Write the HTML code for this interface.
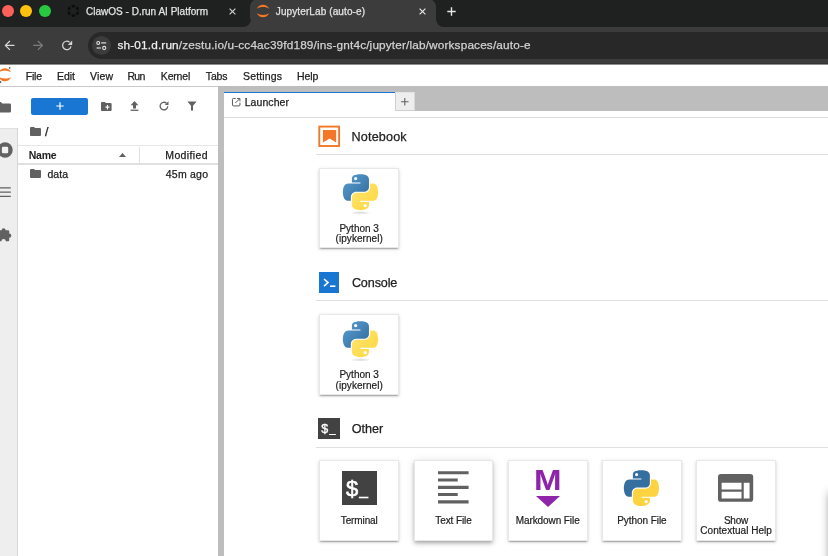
<!DOCTYPE html>
<html lang="en">
<head>
<meta charset="utf-8">
<title>JupyterLab (auto-e)</title>
<style>
*{box-sizing:border-box;margin:0;padding:0}
html,body{width:828px;height:556px;overflow:hidden;background:#fff}
body{font-family:"Liberation Sans",sans-serif;color:#212121;position:relative;-webkit-font-smoothing:antialiased}
#app{position:absolute;left:0;top:0;width:828px;height:556px;overflow:hidden;will-change:transform}
.abs{position:absolute}
.t{position:absolute;white-space:nowrap;line-height:1;-webkit-text-stroke:.25px currentColor}
svg{position:absolute;display:block;overflow:visible}
/* ---------- browser chrome ---------- */
#tabstrip{left:0;top:0;width:828px;height:27px;background:#1f2020}
#toolbar{left:0;top:27px;width:828px;height:37px;background:#3c3c3c}
#acttab{left:250.3px;top:-1px;width:185.4px;height:28px;background:#3c3c3c;border-radius:8px 8px 0 0}
.flare{width:8px;height:8px;top:19px;background:#3c3c3c}
.flare i{position:absolute;left:0;top:0;width:8px;height:8px;background:#1f2020}
#fl i{border-radius:0 0 8px 0}
#fr i{border-radius:0 0 0 8px}
.dot{width:11.8px;height:11.8px;border-radius:50%;top:5.4px}
#pill{left:87.6px;top:31.9px;width:760px;height:27.1px;border-radius:13.6px;background:#282828}
#tune{left:91.6px;top:35.8px;width:19.2px;height:19.2px;border-radius:50%;background:#3c3c3c}
.ct{color:#e3e3e3;font-size:12px}
/* ---------- jupyter ---------- */
#menubar{left:0;top:64px;width:828px;height:22px;background:#fff}
.m{top:70px;font-size:13px;color:#212121}
#side{left:0;top:128px;width:18px;height:428px;background:#eeeeee;border-top:1px solid #e0e0e0}
#sideb{left:17px;top:128px;width:1px;height:428px;background:#d6d6d6}
#dockbg{left:218px;top:86px;width:610px;height:470px;background:#bdbdbd}
#docktab{left:224px;top:91.8px;width:170.6px;height:26px;background:#fff}
#dockblue{left:224px;top:91.5px;width:170.6px;height:1.6px;background:#1976d2}
#dockadd{left:394.8px;top:92px;width:19.8px;height:19.4px;background:#eeeeee;border:1px solid #cfcfcf;border-top-color:#e4e4e4;border-right-color:#d8d8d8}
#main{left:224px;top:111.4px;width:604px;height:450px;background:#fff}
#mainline{left:224px;top:117px;width:604px;height:1.2px;background:#dddddd}
.fb{font-size:12.5px;color:#212121}
.sec{font-size:15.5px;color:#212121}
.hr{height:1px;background:#e0e0e0;left:316.4px;width:512px}
.card{width:79.8px;height:80.9px;background:#fff;border:1px solid #e8e8e8;box-shadow:0 1.6px 1.6px rgba(0,0,0,.14),0 2.4px .8px -1.6px rgba(0,0,0,.2),0 .8px 4px rgba(0,0,0,.12)}
.card.hov{box-shadow:0 3.2px 4px rgba(0,0,0,.14),0 .8px 8px rgba(0,0,0,.12),0 1.6px 3.2px -.8px rgba(0,0,0,.2)}
.lbl{position:absolute;left:0;width:100%;text-align:center;font-size:10px;line-height:10px;color:#212121;white-space:nowrap;-webkit-text-stroke:.2px currentColor}
/*TUNE*/
#tab1{left:86.0px;top:7.2px;font-size:10px;letter-spacing:0.012px}
#tab2{left:275.8px;top:7.2px;font-size:10px;letter-spacing:0.107px}
#url{left:117.5px;top:39.5px;font-size:11.8px;letter-spacing:0.149px}
#m1{left:25.8px;top:70.8px;font-size:10.5px;letter-spacing:-0.241px}
#m2{left:57.0px;top:70.8px;font-size:10.5px;letter-spacing:-0.031px}
#m3{left:90.0px;top:70.8px;font-size:10.5px;letter-spacing:0.141px}
#m4{left:127.5px;top:70.8px;font-size:10.5px;letter-spacing:-0.733px}
#m5{left:160.8px;top:70.8px;font-size:10.5px;letter-spacing:-0.172px}
#m6{left:205.8px;top:70.8px;font-size:10.5px;letter-spacing:-0.163px}
#m7{left:243.0px;top:70.8px;font-size:10.5px;letter-spacing:0.150px}
#m8{left:297.0px;top:70.8px;font-size:10.5px;letter-spacing:-0.103px}
#fname{left:28.7px;top:150.1px;font-size:10.5px;letter-spacing:-0.203px}
#fmod{left:165.3px;top:150.1px;font-size:10.5px;letter-spacing:0.357px}
#fdata{left:47.5px;top:168.6px;font-size:10.5px;letter-spacing:0.021px}
#fago{left:165.8px;top:168.6px;font-size:10.5px;letter-spacing:0.221px}
#ltab{left:244.7px;top:96.9px;font-size:10.5px;letter-spacing:0.072px}
#s1{left:351.6px;top:130.6px;font-size:12.6px;letter-spacing:0.154px}
#s2{left:351.9px;top:276.7px;font-size:12.6px;letter-spacing:-0.120px}
#s3{left:351.7px;top:423.0px;font-size:12.6px;letter-spacing:0.025px}
#l1a{font-size:10px;letter-spacing:0.002px;margin-right:-0.002px}
#l1b{font-size:10px;letter-spacing:0.051px;margin-right:-0.051px}
#l2a{font-size:10px;letter-spacing:0.002px;margin-right:-0.002px}
#l2b{font-size:10px;letter-spacing:0.051px;margin-right:-0.051px}
#l3{font-size:10px;letter-spacing:-0.114px;margin-right:0.114px}
#l4{font-size:10px;letter-spacing:-0.092px;margin-right:0.092px}
#l5{font-size:10px;letter-spacing:-0.086px;margin-right:0.086px}
#l6{font-size:10px;letter-spacing:-0.053px;margin-right:0.053px}
#l7a{font-size:10px;letter-spacing:-0.239px;margin-right:0.239px}
#l7b{font-size:10px;letter-spacing:0.025px;margin-right:-0.025px}
/*ENDTUNE*/
</style>
</head>
<body>
<div id="app">
<!-- ======== Browser chrome ======== -->
<div class="abs" id="tabstrip"></div>
<div class="abs" id="toolbar"></div>
<div class="abs" id="acttab"></div>
<div class="abs flare" id="fl" style="left:242.5px"><i></i></div>
<div class="abs flare" id="fr" style="left:435.5px"><i></i></div>
<div class="abs dot" style="left:2px;background:#fe5f57"></div>
<div class="abs dot" style="left:20px;background:#fdc20c"></div>
<div class="abs dot" style="left:39px;background:#28c840"></div>

<!-- inactive tab favicon -->
<svg style="left:0;top:0" width="90" height="24" viewBox="0 0 90 24"><path d="M73.3 5.9 L77.7 8.4 V13.4 L73.3 15.9 L68.9 13.4 V8.4 Z" fill="none" stroke="#0d0e0e" stroke-width="2.4" stroke-linejoin="round" stroke-dasharray="3.6 1.45" stroke-dashoffset="1.8"/></svg>
<span class="t ct" id="tab1">ClawOS - D.run AI Platform</span>
<svg style="left:228.6px;top:7.9px" width="7" height="7" viewBox="0 0 7 7"><path d="M0.6 0.6 L6.4 6.4 M6.4 0.6 L0.6 6.4" stroke="#cfcfcf" stroke-width="1.15" fill="none"/></svg>

<!-- active tab -->
<svg style="left:0;top:0" width="280" height="24" viewBox="0 0 280 24"><path d="M256.8 8.9 C259 3.4 267 3.4 269.2 8.9 C266.5 6.25 259.5 6.25 256.8 8.9 Z M256.8 13 C259 18.7 267 18.7 269.2 13 C266.5 15.55 259.5 15.55 256.8 13 Z" fill="#f37726"/></svg>
<span class="t ct" id="tab2">JupyterLab (auto-e)</span>
<svg style="left:418.7px;top:7.9px" width="7" height="7" viewBox="0 0 7 7"><path d="M0.6 0.6 L6.4 6.4 M6.4 0.6 L0.6 6.4" stroke="#e6e6e6" stroke-width="1.15" fill="none"/></svg>
<svg style="left:447px;top:7px" width="9" height="9" viewBox="0 0 9 9"><path d="M4.5 0.3 V8.7 M0.3 4.5 H8.7" stroke="#e6e6e6" stroke-width="1.4" fill="none"/></svg>

<!-- toolbar -->
<svg style="left:0;top:30px" width="116" height="32" viewBox="0 30 116 32"><path d="M14.5 45.4 H5.6 M9.9 41 L5.4 45.4 L9.9 49.9" stroke="#d6d6d6" stroke-width="1.25" fill="none"/><path d="M33.2 45.4 H42.2 M37.9 41 L42.4 45.4 L37.9 49.9" stroke="#7c7c7c" stroke-width="1.25" fill="none"/><path d="M71 46.4 A4.25 4.25 0 1 1 69.6 42.2" stroke="#d6d6d6" stroke-width="1.25" fill="none"/><path d="M72.2 40.6 V45 H67.8 Z" fill="#d6d6d6"/></svg>
<div class="abs" id="pill"></div>
<div class="abs" id="tune"></div>
<svg style="left:90px;top:34px" width="24" height="24" viewBox="90 34 24 24"><circle cx="98.2" cy="42.9" r="1.45" fill="none" stroke="#dedede" stroke-width="1.1"/><path d="M101.2 42.9 H106.2" stroke="#dedede" stroke-width="1.2"/><circle cx="104.2" cy="48" r="1.6" fill="none" stroke="#dedede" stroke-width="1.1"/><path d="M96.6 48 H100.8" stroke="#dedede" stroke-width="1.2"/></svg>
<span class="t" style="color:#efefef" id="url">sh-01.d.run<span style="color:#d2d2d2">/zestu.io/u-cc4ac39fd189/ins-gnt4c/jupyter/lab/workspaces/auto-e</span></span>

<!-- ======== JupyterLab ======== -->
<div class="abs" id="menubar"></div>
<div class="abs" style="left:0;top:63px;width:828px;height:1px;background:#353535"></div>
<div class="abs" style="left:0;top:64px;width:828px;height:1px;background:#8e8e8e"></div>
<svg style="left:0;top:64px" width="16" height="22" viewBox="0 64 16 22"><path d="M-1 72.3 C1 67 9 67 11 72.3 C8.5 70.2 1.5 70.2 -1 72.3 Z M-1 77 C1 82.8 9 82.8 11 77 C8.5 79 1.5 79 -1 77 Z" fill="#f37726"/><circle cx="9.6" cy="67.9" r="0.85" fill="#555"/><circle cx="0.3" cy="82.1" r="1" fill="#555"/></svg>
<span class="t m" id="m1">File</span>
<span class="t m" id="m2">Edit</span>
<span class="t m" id="m3">View</span>
<span class="t m" id="m4">Run</span>
<span class="t m" id="m5">Kernel</span>
<span class="t m" id="m6">Tabs</span>
<span class="t m" id="m7">Settings</span>
<span class="t m" id="m8">Help</span>
<div class="abs" style="left:0;top:86px;width:218px;height:1px;background:#c9c9c9"></div>

<!-- left sidebar -->
<div class="abs" id="side"></div>
<div class="abs" id="sideb"></div>
<svg style="left:-4.8px;top:102.1px" width="16" height="10.6" viewBox="0 0 16 10.6"><path d="M1.3 0 H5.8 L7.3 1.5 H14.7 Q16 1.5 16 2.8 V9.3 Q16 10.6 14.7 10.6 H1.3 Q0 10.6 0 9.3 V1.3 Q0 0 1.3 0 Z" fill="#616161"/></svg>
<svg style="left:-3px;top:141.7px" width="16" height="16" viewBox="0 0 16 16"><circle cx="8" cy="8" r="7.7" fill="#616161"/><rect x="4.9" y="4.7" width="6.3" height="6.6" rx="1.2" fill="#f1f1f1"/></svg>
<svg style="left:0;top:186px" width="12" height="12" viewBox="0 0 12 12"><path d="M0 1.9 H10.8 M0 6.1 H10.8 M0 10.3 H10.8" stroke="#616161" stroke-width="1.35"/></svg>
<svg style="left:-3px;top:227px" width="15" height="15" viewBox="0 0 15 15"><path d="M0 3.2 H4.6 A2 2 0 1 1 8.6 3.2 H11.2 Q12.2 3.2 12.2 4.2 V6.6 A2.1 2.1 0 1 1 12.2 10.8 V13.2 Q12.2 14.2 11.2 14.2 H8.8 A2.2 2.2 0 1 0 4.4 14.2 H0 Z" fill="#616161"/></svg>

<!-- file browser -->
<div class="abs" style="left:31px;top:97.5px;width:57.3px;height:17px;background:#1976d2;border-radius:2px"></div>
<svg style="left:56px;top:102px" width="8" height="8" viewBox="0 0 8 8"><path d="M4 0.3 V7.7 M0.3 4 H7.7" stroke="#fff" stroke-width="1.2"/></svg>
<svg style="left:100.8px;top:101.6px" width="10.6" height="9" viewBox="0 0 12 10" preserveAspectRatio="none"><path d="M1 0 H4.4 L5.6 1.2 H11 Q12 1.2 12 2.2 V9 Q12 10 11 10 H1 Q0 10 0 9 V1 Q0 0 1 0 Z" fill="#616161"/><path d="M7.3 3.2 V8.2 M5 5.7 H9.6" stroke="#fff" stroke-width="1.25"/></svg>
<svg style="left:130px;top:101px" width="9" height="10" viewBox="0 0 9 10"><path d="M4.5 0 L8.4 4.2 H6 V7.4 H3 V4.2 H0.6 Z" fill="#616161"/><rect x="0.6" y="8.6" width="7.8" height="1.3" fill="#616161"/></svg>
<svg style="left:158.6px;top:101.1px" width="10" height="10" viewBox="0 0 10 10"><path d="M8.7 5.2 A3.8 3.8 0 1 1 7.5 2.3" stroke="#616161" stroke-width="1.3" fill="none"/><path d="M9.5 0.2 V3.9 H5.8 Z" fill="#616161"/></svg>
<svg style="left:187px;top:101px" width="10" height="10" viewBox="0 0 10 10"><path d="M0.4 0.4 H9.6 L6 4.8 V9.6 H4 V4.8 Z" fill="#616161"/></svg>

<svg style="left:30px;top:127px" width="11" height="9" viewBox="0 0 11 9"><path d="M1 0 H4 L5.1 1.1 H10 Q11 1.1 11 2.1 V8 Q11 9 10 9 H1 Q0 9 0 8 V1 Q0 0 1 0 Z" fill="#616161"/></svg>
<span class="t fb" style="left:45px;top:126px">/</span>

<div class="abs" style="left:18px;top:145px;width:200px;height:1px;background:#e6e6e6"></div>
<span class="t fb" style="font-weight:bold;color:#212121;-webkit-text-stroke:0" id="fname">Name</span>
<svg style="left:119px;top:153px" width="7" height="4" viewBox="0 0 7 4"><path d="M3.5 0 L7 4 H0 Z" fill="#616161"/></svg>
<div class="abs" style="left:139px;top:147px;width:1px;height:16px;background:#e0e0e0"></div>
<span class="t fb" id="fmod">Modified</span>
<div class="abs" style="left:18px;top:163px;width:200px;height:2px;background:#e0e0e0"></div>

<svg style="left:30px;top:169px" width="11" height="9" viewBox="0 0 11 9"><path d="M1 0 H4 L5.1 1.1 H10 Q11 1.1 11 2.1 V8 Q11 9 10 9 H1 Q0 9 0 8 V1 Q0 0 1 0 Z" fill="#616161"/></svg>
<span class="t fb" id="fdata">data</span>
<span class="t fb" id="fago">45m ago</span>

<!-- dock -->
<div class="abs" id="dockbg"></div>
<div class="abs" id="main"></div>
<div class="abs" id="docktab"></div>
<div class="abs" id="dockblue"></div>
<div class="abs" id="mainline"></div>
<div class="abs" id="dockadd"></div>
<svg style="left:401px;top:97.5px" width="7.6" height="7.6" viewBox="0 0 7.6 7.6"><path d="M3.8 0 V7.6 M0 3.8 H7.6" stroke="#616161" stroke-width="1.1"/></svg>
<svg style="left:231.7px;top:97.9px" width="8.4" height="8.4" viewBox="0 0 9 9"><path d="M4 0.5 H1.5 Q0.5 0.5 0.5 1.5 V7.5 Q0.5 8.5 1.5 8.5 H7.5 Q8.5 8.5 8.5 7.5 V5" stroke="#555" stroke-width="1.05" fill="none"/><path d="M3.6 5.4 L8 1 M5.4 0.5 H8.5 V3.6" stroke="#555" stroke-width="1.05" fill="none"/></svg>
<span class="t" style="color:#212121" id="ltab">Launcher</span>

<!-- ======== Launcher content ======== -->
<!-- Notebook -->
<svg style="left:310px;top:120px" width="40" height="32" viewBox="310 120 40 32"><rect x="319.3" y="126.6" width="19.8" height="19.4" fill="#fff" stroke="#f37726" stroke-width="1.9"/></svg>
<svg style="left:322.6px;top:130.2px" width="13.2" height="12.4" viewBox="0 0 13 14" preserveAspectRatio="none"><path d="M0 0 H13 V14 L6.5 9.6 L0 14 Z" fill="#f37726"/></svg>
<span class="t sec" id="s1">Notebook</span>
<div class="abs hr" style="top:154px"></div>
<div class="abs card" style="left:319.3px;top:167.5px">
  <svg style="left:22.4px;top:5.6px" width="35" height="35" viewBox="0 0 110 110">
    <linearGradient id="pb1" x1="0" y1="0" x2="1" y2="1"><stop offset="0" stop-color="#5a9fd4"/><stop offset="1" stop-color="#306998"/></linearGradient>
    <linearGradient id="py1" x1="1" y1="1" x2="0" y2="0"><stop offset="0" stop-color="#ffd43b"/><stop offset="1" stop-color="#ffe873"/></linearGradient>
    <radialGradient id="ps1" cx="0.5" cy="0.5" r="0.5"><stop offset="0" stop-color="#b8b8b8" stop-opacity=".45"/><stop offset="1" stop-color="#7f7f7f" stop-opacity="0"/></radialGradient>
    <path fill="url(#pb1)" d="M54.3 0.9c-4.6 0-9 .4-12.8 1.1C30.1 4 28 8.2 28 16.1v10.400h26.800V30H18c-7.800 0-14.600 4.700-16.700 13.600-2.500 10.200-2.600 16.600 0 27.200 1.900 7.900 6.500 13.600 14.200 13.600h9.200V72.100c0-8.800 7.700-16.700 16.700-16.700h26.800c7.400 0 13.400-6.100 13.400-13.600V16.100c0-7.300-6.100-12.700-13.400-13.900C63.500 1.400 58.800.9 54.300.9zM39.800 9.300c2.800 0 5 2.300 5 5.100 0 2.800-2.300 5.100-5 5.100-2.800 0-5-2.300-5-5.100 0-2.800 2.300-5.100 5-5.100z"/>
    <path fill="url(#py1)" d="M85 30v11.900c0 9.200-7.800 17-16.700 17H41.500c-7.300 0-13.400 6.300-13.400 13.600v25.500c0 7.300 6.300 11.500 13.400 13.600 8.500 2.500 16.600 2.900 26.800 0 6.700-2 13.400-5.900 13.400-13.600V87.800H54.900v-3.400h40.200c7.800 0 10.700-5.400 13.400-13.600 2.800-8.400 2.700-16.500 0-27.200-1.900-7.700-5.600-13.600-13.400-13.600H85zM69.900 94.600c2.800 0 5 2.300 5 5.100 0 2.800-2.300 5.100-5 5.100-2.800 0-5-2.300-5-5.100 0-2.800 2.300-5.100 5-5.100z"/>
    <ellipse cx="55" cy="122" rx="32" ry="5.5" fill="url(#ps1)"/>
  </svg>
  <div class="lbl" style="top:55px"><span id="l1a">Python 3</span></div>
  <div class="lbl" style="top:65.5px"><span id="l1b">(ipykernel)</span></div>
</div>

<!-- Console -->
<div class="abs" style="left:318.8px;top:272.1px;width:20.5px;height:20.5px;background:#1976d2"></div>
<svg style="left:323px;top:278px" width="14" height="10" viewBox="0 0 14 10"><path d="M1 1 L5 4.6 L1 8.2" stroke="#fff" stroke-width="1.6" fill="none"/><rect x="7" y="7.4" width="5.4" height="1.6" fill="#fff"/></svg>
<span class="t sec" id="s2">Console</span>
<div class="abs hr" style="top:300px"></div>
<div class="abs card" style="left:319.3px;top:314.3px">
  <svg style="left:22.4px;top:5.6px" width="35" height="35" viewBox="0 0 110 110">
    <linearGradient id="pb2" x1="0" y1="0" x2="1" y2="1"><stop offset="0" stop-color="#5a9fd4"/><stop offset="1" stop-color="#306998"/></linearGradient>
    <linearGradient id="py2" x1="1" y1="1" x2="0" y2="0"><stop offset="0" stop-color="#ffd43b"/><stop offset="1" stop-color="#ffe873"/></linearGradient>
    <radialGradient id="ps2" cx="0.5" cy="0.5" r="0.5"><stop offset="0" stop-color="#b8b8b8" stop-opacity=".45"/><stop offset="1" stop-color="#7f7f7f" stop-opacity="0"/></radialGradient>
    <path fill="url(#pb2)" d="M54.3 0.9c-4.6 0-9 .4-12.8 1.1C30.1 4 28 8.2 28 16.1v10.400h26.800V30H18c-7.800 0-14.600 4.700-16.700 13.600-2.500 10.200-2.600 16.600 0 27.200 1.900 7.900 6.500 13.600 14.200 13.600h9.200V72.100c0-8.800 7.700-16.700 16.700-16.700h26.800c7.400 0 13.400-6.100 13.400-13.600V16.100c0-7.300-6.100-12.700-13.400-13.900C63.500 1.400 58.800.9 54.300.9zM39.800 9.300c2.800 0 5 2.300 5 5.100 0 2.800-2.300 5.100-5 5.100-2.800 0-5-2.300-5-5.100 0-2.800 2.300-5.100 5-5.100z"/>
    <path fill="url(#py2)" d="M85 30v11.900c0 9.200-7.800 17-16.700 17H41.500c-7.300 0-13.400 6.300-13.400 13.600v25.500c0 7.300 6.300 11.500 13.400 13.600 8.500 2.500 16.600 2.900 26.800 0 6.700-2 13.400-5.900 13.400-13.600V87.800H54.900v-3.400h40.200c7.800 0 10.700-5.400 13.400-13.600 2.800-8.400 2.700-16.500 0-27.200-1.900-7.700-5.600-13.600-13.400-13.600H85zM69.900 94.600c2.800 0 5 2.300 5 5.100 0 2.800-2.300 5.100-5 5.100-2.800 0-5-2.300-5-5.100 0-2.800 2.300-5.100 5-5.100z"/>
    <ellipse cx="55" cy="122" rx="32" ry="5.5" fill="url(#ps2)"/>
  </svg>
  <div class="lbl" style="top:55px"><span id="l2a">Python 3</span></div>
  <div class="lbl" style="top:65.5px"><span id="l2b">(ipykernel)</span></div>
</div>

<!-- Other -->
<div class="abs" style="left:318.4px;top:418.1px;width:21.5px;height:21.2px;background:#424242"></div>
<span class="t" style="left:321.2px;top:423.2px;font-size:12.5px;color:#fff;-webkit-text-stroke:.35px #fff" id="dsm">$<span style="position:absolute;left:8.2px;top:0.7px;font-size:10.5px;-webkit-text-stroke:.5px #fff">_</span></span>
<span class="t sec" id="s3">Other</span>
<div class="abs hr" style="top:447px"></div>

<div class="abs card" style="left:319.4px;top:460.4px">
  <div class="abs" style="left:22px;top:9.9px;width:34.7px;height:34.2px;background:#424242"></div>
  <span class="t" style="left:25.6px;top:16.6px;font-size:22px;color:#fff;-webkit-text-stroke:.6px #fff" id="dbig">$<span style="position:absolute;left:13.6px;top:4.4px;font-size:15px;-webkit-text-stroke:.7px #fff">_</span></span>
  <div class="lbl" style="top:55px"><span id="l3">Terminal</span></div>
</div>
<div class="abs card hov" style="left:413.6px;top:460.4px">
  <svg style="left:23.8px;top:9.9px" width="30.6" height="32.6" viewBox="0 0 31 33" preserveAspectRatio="none"><path d="M0 1.8 H31 M0 9.1 H20 M0 16.5 H31 M0 23.8 H20 M0 31.2 H31" stroke="#616161" stroke-width="3.2"/></svg>
  <div class="lbl" style="top:55px"><span id="l4">Text File</span></div>
</div>
<div class="abs card" style="left:507.8px;top:460.4px">
  <span class="t" style="left:25.6px;top:4.4px;font-size:29px;font-weight:bold;color:#8e24aa;-webkit-text-stroke:0;transform:scaleX(1.14);transform-origin:0 0" id="mdm">M</span>
  <svg style="left:27px;top:35px" width="24" height="11" viewBox="0 0 24 11"><path d="M0 0 H24 L12 11 Z" fill="#8e24aa"/></svg>
  <div class="lbl" style="top:55px"><span id="l5">Markdown File</span></div>
</div>
<div class="abs card" style="left:602.0px;top:460.4px">
  <svg style="left:21.2px;top:8.7px" width="34.9" height="34.9" viewBox="0 0 110 110"><path fill="#346f9f" d="M54.3 0.9c-4.6 0-9 .4-12.8 1.1C30.1 4 28 8.2 28 16.1v10.400h26.800V30H18c-7.800 0-14.600 4.700-16.700 13.600-2.500 10.200-2.600 16.600 0 27.200 1.900 7.900 6.500 13.600 14.200 13.600h9.200V72.100c0-8.800 7.700-16.700 16.700-16.700h26.800c7.400 0 13.400-6.100 13.400-13.600V16.100c0-7.300-6.100-12.700-13.400-13.900C63.500 1.400 58.800.9 54.300.9zM39.800 9.300c2.800 0 5 2.300 5 5.100 0 2.800-2.300 5.100-5 5.100-2.800 0-5-2.300-5-5.100 0-2.800 2.300-5.100 5-5.100z"/><path fill="#fdd440" d="M85 30v11.900c0 9.200-7.800 17-16.700 17H41.500c-7.300 0-13.400 6.300-13.400 13.600v25.500c0 7.300 6.300 11.500 13.400 13.600 8.500 2.500 16.600 2.900 26.800 0 6.700-2 13.400-5.900 13.400-13.600V87.800H54.900v-3.400h40.200c7.800 0 10.700-5.400 13.400-13.600 2.800-8.400 2.700-16.500 0-27.200-1.900-7.700-5.600-13.600-13.400-13.600H85zM69.900 94.600c2.800 0 5 2.300 5 5.100 0 2.800-2.300 5.100-5 5.100-2.800 0-5-2.300-5-5.100 0-2.800 2.300-5.100 5-5.100z"/></svg>
  <div class="lbl" style="top:55px"><span id="l6">Python File</span></div>
</div>
<div class="abs card" style="left:696.2px;top:460.4px">
  <svg style="left:20.6px;top:12.8px" width="35.2" height="27.8" viewBox="0 0 35 29" preserveAspectRatio="none"><path d="M3 0 H32 Q35 0 35 3 V26 Q35 29 32 29 H3 Q0 29 0 26 V3 Q0 0 3 0 Z M3.6 9 V16.2 H23.4 V9 Z M3.6 18.4 V25.6 H23.4 V18.4 Z M25.6 9 V25.6 H31.4 V9 Z" fill="#616161" fill-rule="evenodd"/></svg>
  <div class="lbl" style="top:55px"><span id="l7a">Show</span></div>
  <div class="lbl" style="top:65px"><span id="l7b">Contextual Help</span></div>
</div>

<!-- popup shadow at the right edge -->
<div class="abs" style="left:830px;top:493px;width:20px;height:80px;background:#fff;box-shadow:0 0 10px rgba(0,0,0,.5)"></div>


</div>
</body>
</html>
